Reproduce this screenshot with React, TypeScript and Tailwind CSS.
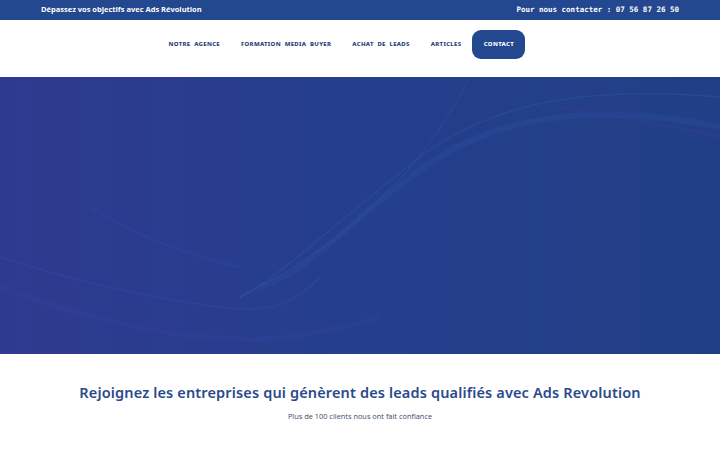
export default function App() {
  const links = ['NOTRE AGENCE', 'FORMATION MEDIA BUYER', 'ACHAT DE LEADS', 'ARTICLES'];

  return (
    <div className="min-h-[450px] w-full bg-white">
      {/* Top bar */}
      <div className="flex h-5 items-center justify-between bg-[#24488f] pl-[41px] pr-[41px]">
        <span className="font-['Open_Sans',sans-serif] text-[7.5px] font-bold text-white">
          Dépassez vos objectifs avec Ads Révolution
        </span>
        <span className="font-['DejaVu_Sans_Mono',monospace] text-[7.5px] font-bold text-white">
          Pour nous contacter : 07 56 87 26 50
        </span>
      </div>

      {/* Nav */}
      <nav className="flex h-[57px] items-center justify-center bg-white pb-2 pr-[26px]">
        <ul className="flex items-center gap-[21px] font-['Noto_Sans',sans-serif] text-[6px] font-extrabold tracking-[0.05em] text-[#2a3f7a]">
          {links.map((l) => (
            <li key={l} className="whitespace-pre">
              {l.split(' ').join('  ')}
            </li>
          ))}
          <li>
            <a className="-ml-[10px] flex h-[29px] w-[53px] items-center justify-center rounded-[9px] bg-[#24488f] text-white">
              CONTACT
            </a>
          </li>
        </ul>
      </nav>

      {/* Hero */}
      <section className="relative h-[277px] overflow-hidden bg-gradient-to-r from-[#2e3a8f] via-[#243f8c] to-[#213f86]">
        <svg className="absolute inset-0 h-full w-full" viewBox="0 0 720 277" preserveAspectRatio="none" fill="none">
          <path d="M470 0 C440 60 380 150 240 220" stroke="#3b5fb8" strokeOpacity="0.25" strokeWidth="1.2" />
          <path d="M720 20 C600 10 500 20 420 80 C330 150 280 200 240 220" stroke="#3d64bd" strokeOpacity="0.25" strokeWidth="1.5" />
          <path d="M720 50 C620 30 520 30 440 80 C360 130 320 190 260 210" stroke="#3a5fb9" strokeOpacity="0.18" strokeWidth="6" />
          <path d="M0 180 C60 200 140 220 220 230 C270 236 290 230 320 200" stroke="#3c4cae" strokeOpacity="0.3" strokeWidth="2" />
          <path d="M90 130 C140 160 190 180 240 190" stroke="#2f4bb0" strokeOpacity="0.25" strokeWidth="3" />
          <path d="M0 210 C80 240 160 260 240 262 C300 264 340 250 380 240" stroke="#3a46a8" strokeOpacity="0.22" strokeWidth="6" />
          <path d="M560 30 C620 40 680 50 720 60" stroke="#3d3a9a" strokeOpacity="0.3" strokeWidth="3" />
        </svg>
      </section>

      {/* Clients */}
      <section className="flex flex-col items-center pt-[28px]">
        <h2 className="font-['Noto_Sans',sans-serif] text-[14.5px] font-semibold tracking-[0.01em] text-[#2a4a8c]">
          Rejoignez les entreprises qui génèrent des leads qualifiés avec Ads Revolution
        </h2>
        <p className="mt-[7px] font-['Open_Sans',sans-serif] text-[7.4px] text-[#3c4a6a]">
          Plus de 100 clients nous ont fait confiance
        </p>
      </section>
    </div>
  );
}
